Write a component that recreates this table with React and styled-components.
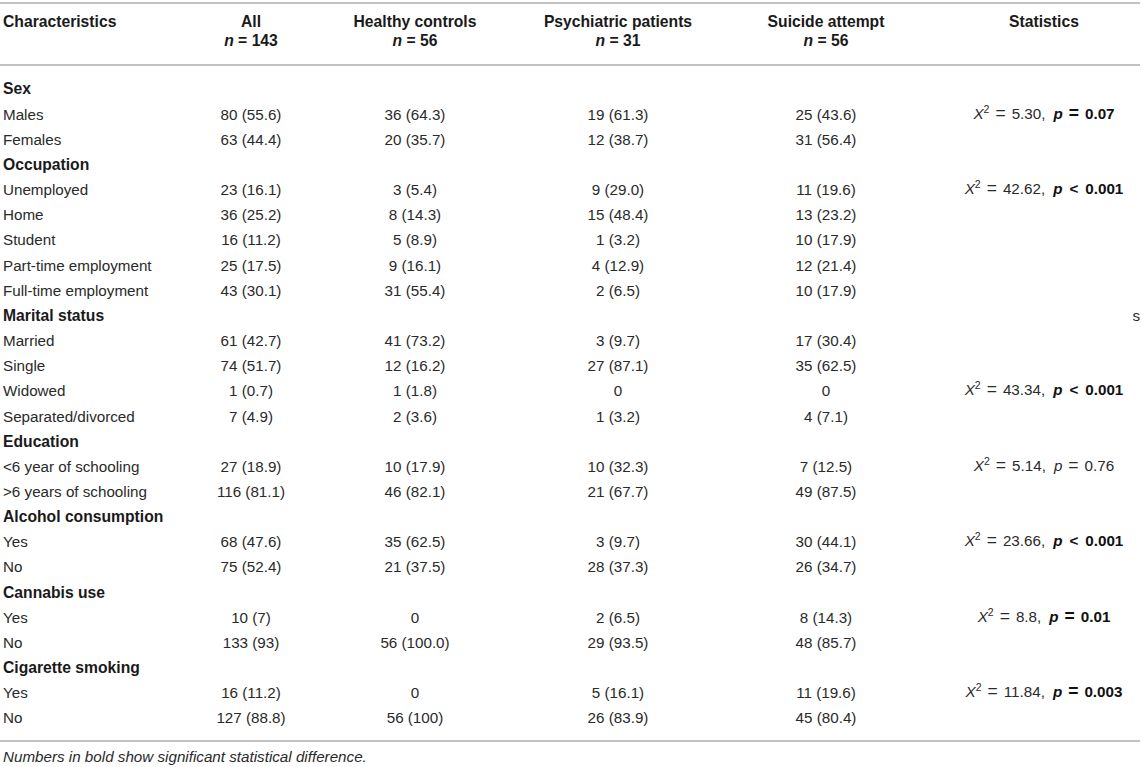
import React from "react";
import styled, { createGlobalStyle } from "styled-components";

const GlobalStyle = createGlobalStyle`
  body {
    margin: 0;
    background: #ffffff;
    font-family: "Liberation Sans", Arial, sans-serif;
    color: #222222;
  }
`;

const COLS = "172px 158px 170px 236px 180px 1fr";

const Wrapper = styled.div`
  width: 1140px;
  padding-top: 2px;
  font-size: 15.2px;
`;

const HeaderRow = styled.div`
  display: grid;
  grid-template-columns: ${COLS};
  border-top: 2px solid #c2c2c2;
  border-bottom: 2px solid #c2c2c2;
  padding: 8px 0 14px;
  line-height: 19px;
  font-size: 15.7px;
  font-weight: 700;
  color: #1a1a1a;
  white-space: nowrap;
`;

const HeadCell = styled.div`
  display: flex;
  flex-direction: column;
  align-items: ${(p) => (p.$left ? "flex-start" : "center")};
  padding-left: ${(p) => (p.$left ? "3px" : p.$stat ? "32px" : "0")};
`;

const Body = styled.div`
  padding: 10.4px 0 10px;
  border-bottom: 2px solid #c2c2c2;
`;

const Row = styled.div`
  display: grid;
  grid-template-columns: ${COLS};
  height: 25.16px;
  align-items: center;
  line-height: 19px;
  white-space: nowrap;
`;

const Label = styled.div`
  padding-left: 3px;
  font-weight: ${(p) => (p.$group ? 700 : 400)};
  font-size: ${(p) => (p.$group ? "15.7px" : "15.2px")};
  color: ${(p) => (p.$group ? "#1a1a1a" : "#2a2a2a")};
`;

const Cell = styled.div`
  display: flex;
  justify-content: center;
  color: #2a2a2a;
`;

const Stat = styled.div`
  display: flex;
  justify-content: ${(p) => (p.$right ? "flex-end" : "center")};
  padding-left: 32px;
  color: #2a2a2a;
`;

const Formula = styled.span`
  white-space: nowrap;
`;

const Sup = styled.span`
  position: relative;
  top: -6px;
  font-size: 10.5px;
`;

const Op = styled.span`
  margin: 0 ${(p) => (p.$small ? "7px" : "6px")};
  font-size: ${(p) => (p.$small ? "15.2px" : "17.5px")};
  line-height: 0;
`;

const Comma = styled.span`
  margin-right: 8px;
`;

const Strong = styled.b`
  color: #111111;
`;

const Note = styled.div`
  margin-top: 5px;
  padding-left: 3px;
  font-style: italic;
  line-height: 19px;
  color: #2a2a2a;
`;

const Chi = ({ v, p, op = "=", bold = true }) => {
  const tail = (
    <>
      <i>p</i>
      <Op $small={op !== "="}>{op}</Op>
      {p}
    </>
  );
  return (
    <Formula>
      <i>X</i>
      <Sup>2</Sup>
      <Op>=</Op>
      {v}
      <Comma>,</Comma>
      {bold ? <Strong>{tail}</Strong> : tail}
    </Formula>
  );
};

const rows = [
  { group: "Sex" },
  { label: "Males", v: ["80 (55.6)", "36 (64.3)", "19 (61.3)", "25 (43.6)"], stat: <Chi v="5.30" p="0.07" /> },
  { label: "Females", v: ["63 (44.4)", "20 (35.7)", "12 (38.7)", "31 (56.4)"] },
  { group: "Occupation" },
  { label: "Unemployed", v: ["23 (16.1)", "3 (5.4)", "9 (29.0)", "11 (19.6)"], stat: <Chi v="42.62" p="0.001" op="<" /> },
  { label: "Home", v: ["36 (25.2)", "8 (14.3)", "15 (48.4)", "13 (23.2)"] },
  { label: "Student", v: ["16 (11.2)", "5 (8.9)", "1 (3.2)", "10 (17.9)"] },
  { label: "Part-time employment", v: ["25 (17.5)", "9 (16.1)", "4 (12.9)", "12 (21.4)"] },
  { label: "Full-time employment", v: ["43 (30.1)", "31 (55.4)", "2 (6.5)", "10 (17.9)"] },
  { group: "Marital status", stray: "s" },
  { label: "Married", v: ["61 (42.7)", "41 (73.2)", "3 (9.7)", "17 (30.4)"] },
  { label: "Single", v: ["74 (51.7)", "12 (16.2)", "27 (87.1)", "35 (62.5)"] },
  { label: "Widowed", v: ["1 (0.7)", "1 (1.8)", "0", "0"], stat: <Chi v="43.34" p="0.001" op="<" /> },
  { label: "Separated/divorced", v: ["7 (4.9)", "2 (3.6)", "1 (3.2)", "4 (7.1)"] },
  { group: "Education" },
  { label: "<6 year of schooling", v: ["27 (18.9)", "10 (17.9)", "10 (32.3)", "7 (12.5)"], stat: <Chi v="5.14" p="0.76" bold={false} /> },
  { label: ">6 years of schooling", v: ["116 (81.1)", "46 (82.1)", "21 (67.7)", "49 (87.5)"] },
  { group: "Alcohol consumption" },
  { label: "Yes", v: ["68 (47.6)", "35 (62.5)", "3 (9.7)", "30 (44.1)"], stat: <Chi v="23.66" p="0.001" op="<" /> },
  { label: "No", v: ["75 (52.4)", "21 (37.5)", "28 (37.3)", "26 (34.7)"] },
  { group: "Cannabis use" },
  { label: "Yes", v: ["10 (7)", "0", "2 (6.5)", "8 (14.3)"], stat: <Chi v="8.8" p="0.01" /> },
  { label: "No", v: ["133 (93)", "56 (100.0)", "29 (93.5)", "48 (85.7)"] },
  { group: "Cigarette smoking" },
  { label: "Yes", v: ["16 (11.2)", "0", "5 (16.1)", "11 (19.6)"], stat: <Chi v="11.84" p="0.003" /> },
  { label: "No", v: ["127 (88.8)", "56 (100)", "26 (83.9)", "45 (80.4)"] },
];

const headers = [
  ["All", "143"],
  ["Healthy controls", "56"],
  ["Psychiatric patients", "31"],
  ["Suicide attempt", "56"],
];

export default function App() {
  return (
    <Wrapper>
      <GlobalStyle />
      <HeaderRow>
        <HeadCell $left>Characteristics</HeadCell>
        {headers.map(([title, n]) => (
          <HeadCell key={title}>
            <span>{title}</span>
            <span>
              <i>n</i> = {n}
            </span>
          </HeadCell>
        ))}
        <HeadCell $stat>Statistics</HeadCell>
      </HeaderRow>
      <Body>
        {rows.map((r, i) =>
          r.group ? (
            <Row key={i}>
              <Label $group>{r.group}</Label>
              <Cell />
              <Cell />
              <Cell />
              <Cell />
              <Stat $right>{r.stray}</Stat>
            </Row>
          ) : (
            <Row key={i}>
              <Label>{r.label}</Label>
              {r.v.map((val, j) => (
                <Cell key={j}>{val}</Cell>
              ))}
              <Stat>{r.stat}</Stat>
            </Row>
          )
        )}
      </Body>
      <Note>Numbers in bold show significant statistical difference.</Note>
    </Wrapper>
  );
}
